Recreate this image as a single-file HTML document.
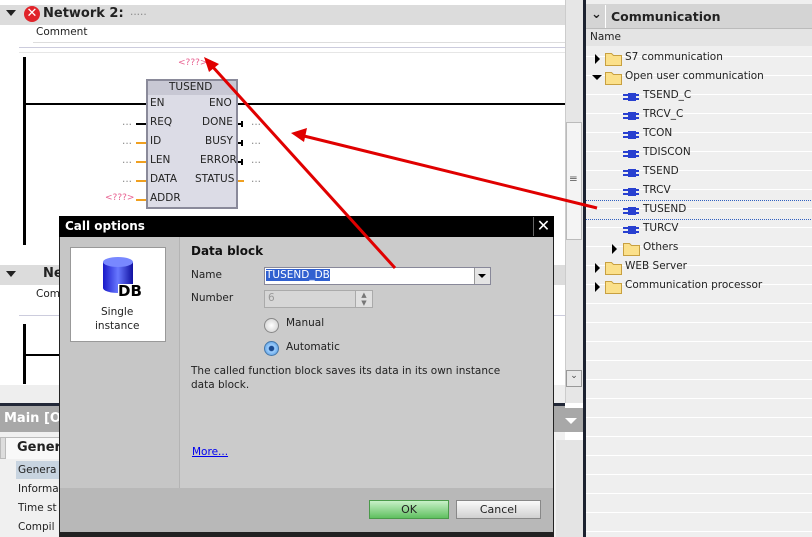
<!DOCTYPE html>
<html><head><style>
*{margin:0;padding:0;box-sizing:border-box}
body{width:812px;height:537px;overflow:hidden;background:#fff;font-family:"DejaVu Sans","Liberation Sans",sans-serif;font-size:11px;color:#222;position:relative}
.a{position:absolute}
.lbl{position:absolute;font-size:10.5px;white-space:nowrap}
.r .lbl{}
</style></head><body>
<!-- editor top -->
<div class="a" style="left:0;top:5px;width:565px;height:20px;background:#dcdcdc"></div>
<div class="a" style="left:6px;top:10px;width:0;height:0;border-left:5px solid transparent;border-right:5px solid transparent;border-top:6px solid #222"></div>
<div class="a" style="left:24px;top:6px;width:16px;height:16px;border-radius:50%;background:#e0242a;color:#fff;font-size:13px;font-weight:bold;line-height:16px;text-align:center">✕</div>
<div class="lbl" style="left:43px;top:6px;font-size:13px;font-weight:bold">Network 2:</div>
<div class="lbl" style="left:130px;top:6px;color:#888">.....</div>
<div class="a" style="left:33px;top:26px;width:532px;height:17px;background:#fff;border-bottom:1px solid #ddd"></div>
<div class="lbl" style="left:36px;top:26px">Comment</div>
<div class="a" style="left:19px;top:47px;width:546px;height:1px;background:#ccccdd"></div>
<div class="a" style="left:19px;top:52px;width:546px;height:1px;background:#e6e6e6"></div>
<!-- ladder -->
<div class="a" style="left:23px;top:57px;width:3px;height:188px;background:#000"></div>
<div class="a" style="left:23px;top:103px;width:124px;height:2px;background:#000"></div>
<div class="a" style="left:238px;top:103px;width:327px;height:2px;background:#000"></div>
<div class="lbl" style="left:178px;top:58px;color:#e86090;font-size:9px">&lt;???&gt;</div>
<div class="a" style="left:146px;top:79px;width:92px;height:130px;background:#dcdce6;border:2px solid #8a8a9a"></div>
<div class="a" style="left:148px;top:81px;width:88px;height:14px;background:#c8c8d4"></div>
<div class="lbl" style="left:169px;top:81px">TUSEND</div>
<div class="lbl" style="left:150px;top:97px">EN</div><div class="lbl" style="left:209px;top:97px">ENO</div>
<div class="lbl" style="left:150px;top:116px">REQ</div><div class="lbl" style="left:202px;top:116px">DONE</div>
<div class="lbl" style="left:150px;top:135px">ID</div><div class="lbl" style="left:205px;top:135px">BUSY</div>
<div class="lbl" style="left:150px;top:154px">LEN</div><div class="lbl" style="left:200px;top:154px">ERROR</div>
<div class="lbl" style="left:150px;top:173px">DATA</div><div class="lbl" style="left:195px;top:173px">STATUS</div>
<div class="lbl" style="left:150px;top:192px">ADDR</div>
<div class="a" style="left:136px;top:123px;width:10px;height:2px;background:#000"></div>
<div class="a" style="left:136px;top:142px;width:10px;height:2px;background:#f0a020"></div>
<div class="a" style="left:136px;top:161px;width:10px;height:2px;background:#f0a020"></div>
<div class="a" style="left:136px;top:180px;width:10px;height:2px;background:#f0a020"></div>
<div class="a" style="left:136px;top:199px;width:10px;height:2px;background:#f0a020"></div>
<div class="a" style="left:238px;top:123px;width:5px;height:2px;background:#000"></div><div class="a" style="left:241px;top:121px;width:2px;height:6px;background:#000"></div>
<div class="a" style="left:238px;top:142px;width:5px;height:2px;background:#000"></div><div class="a" style="left:241px;top:140px;width:2px;height:6px;background:#000"></div>
<div class="a" style="left:238px;top:161px;width:5px;height:2px;background:#000"></div><div class="a" style="left:241px;top:159px;width:2px;height:6px;background:#000"></div>
<div class="a" style="left:238px;top:180px;width:6px;height:2px;background:#f0a020"></div>
<div class="lbl" style="left:122px;top:116px;color:#888">...</div>
<div class="lbl" style="left:122px;top:135px;color:#888">...</div>
<div class="lbl" style="left:122px;top:154px;color:#888">...</div>
<div class="lbl" style="left:122px;top:173px;color:#888">...</div>
<div class="lbl" style="left:105px;top:193px;color:#e86090;font-size:9px">&lt;???&gt;</div>
<div class="lbl" style="left:251px;top:116px;color:#888">...</div>
<div class="lbl" style="left:251px;top:135px;color:#888">...</div>
<div class="lbl" style="left:251px;top:154px;color:#888">...</div>
<div class="lbl" style="left:251px;top:173px;color:#888">...</div>
<!-- network 3 -->
<div class="a" style="left:0;top:265px;width:565px;height:20px;background:#dcdcdc"></div>
<div class="a" style="left:6px;top:271px;width:0;height:0;border-left:5px solid transparent;border-right:5px solid transparent;border-top:6px solid #222"></div>
<div class="lbl" style="left:43px;top:266px;font-size:13px;font-weight:bold">Ne</div>
<div class="lbl" style="left:36px;top:288px">Com</div>
<div class="a" style="left:19px;top:315px;width:546px;height:1px;background:#ccccdd"></div>
<div class="a" style="left:23px;top:324px;width:3px;height:60px;background:#000"></div>
<div class="a" style="left:23px;top:354px;width:40px;height:2px;background:#000"></div>
<div class="a" style="left:0;top:385px;width:565px;height:18px;background:#eee"></div>
<!-- bottom inspector -->
<div class="a" style="left:0;top:403px;width:565px;height:3px;background:#222838"></div>
<div class="a" style="left:0;top:406px;width:565px;height:26px;background:#a8a8a8"></div>
<div class="lbl" style="left:4px;top:411px;color:#fff;font-weight:bold;font-size:13px">Main [OI</div>
<div class="a" style="left:0;top:432px;width:565px;height:105px;background:#f0f0f0"></div>
<div class="a" style="left:0;top:437px;width:6px;height:22px;background:#ddd;border:1px solid #bbb"></div>
<div class="a" style="left:6px;top:437px;width:60px;height:22px;background:#f8f8f8;border-top:1px solid #bbb"></div>
<div class="lbl" style="left:17px;top:440px;font-weight:bold;font-size:13px">Genera</div>
<div class="a" style="left:16px;top:461px;width:50px;height:18px;background:#c8d4e0"></div>
<div class="lbl" style="left:18px;top:464px">Genera</div>
<div class="lbl" style="left:18px;top:483px">Informa</div>
<div class="lbl" style="left:18px;top:502px">Time st</div>
<div class="lbl" style="left:18px;top:521px">Compil</div>
<!-- scrollbar -->
<div class="a" style="left:565px;top:0;width:18px;height:403px;background:#e6e6e6;border-left:1px solid #ccc"></div>
<div class="a" style="left:566px;top:122px;width:16px;height:118px;background:#f4f4f4;border:1px solid #bbb"></div>
<div class="lbl" style="left:569px;top:173px;color:#666">≡</div>
<div class="a" style="left:566px;top:370px;width:16px;height:17px;background:#e8e8e8;border:1px solid #999;font-size:9px;text-align:center;color:#444">⌄</div>
<div class="a" style="left:558px;top:408px;width:25px;height:24px;background:#a8a8a8"></div>
<div class="a" style="left:565px;top:418px;width:0;height:0;border-left:6px solid transparent;border-right:6px solid transparent;border-top:6px solid #fff"></div>
<div class="a" style="left:556px;top:440px;width:27px;height:97px;background:#e4e4e4"></div>
<!-- right panel -->
<div class="a" style="left:583px;top:0;width:3px;height:537px;background:#1c2230"></div>
<div class="a" style="left:586px;top:0;width:226px;height:537px;background:repeating-linear-gradient(#efefef 0,#efefef 18px,#fff 18px,#fff 19px)"></div>
<div class="a" style="left:586px;top:4px;width:226px;height:25px;background:#d4d4d4;border-bottom:1px solid #bbb"></div>
<div class="a" style="left:605px;top:5px;width:1px;height:23px;background:#fff"></div>
<div class="lbl" style="left:591px;top:7px;font-weight:bold;font-size:13px">⌄</div>
<div class="lbl" style="left:611px;top:9px;font-weight:bold;font-size:12.5px">Communication</div>
<div class="a" style="left:586px;top:29px;width:226px;height:17px;background:#e4e4e4"></div>
<div class="lbl" style="left:590px;top:31px">Name</div>
<svg class="a" style="left:586px;top:48px" width="226" height="250">
<g fill="#000"><path d="M9 6 l5 5 -5 5z"/><path d="M6 27 l10 0 -5 5z"/><path d="M26 196 l5 5 -5 5z"/><path d="M9 215 l5 5 -5 5z"/><path d="M9 234 l5 5 -5 5z"/></g>
<g fill="#fbe08a" stroke="#c8a040"><path d="M19.5 5.5h6l2 2h8v10h-16z"/><path d="M19.5 24.5h6l2 2h8v10h-16z"/><path d="M37.5 195.5h6l2 2h8v10h-16z"/><path d="M19.5 214.5h6l2 2h8v10h-16z"/><path d="M19.5 233.5h6l2 2h8v10h-16z"/></g>
<g fill="#2840d0"><rect x="42" y="45" width="8" height="8"/><rect x="42" y="64" width="8" height="8"/><rect x="42" y="83" width="8" height="8"/><rect x="42" y="102" width="8" height="8"/><rect x="42" y="121" width="8" height="8"/><rect x="42" y="140" width="8" height="8"/><rect x="42" y="159" width="8" height="8"/><rect x="42" y="178" width="8" height="8"/>
<rect x="37" y="46" width="16" height="2"/><rect x="37" y="50" width="16" height="2"/><rect x="37" y="65" width="16" height="2"/><rect x="37" y="69" width="16" height="2"/><rect x="37" y="84" width="16" height="2"/><rect x="37" y="88" width="16" height="2"/><rect x="37" y="103" width="16" height="2"/><rect x="37" y="107" width="16" height="2"/><rect x="37" y="122" width="16" height="2"/><rect x="37" y="126" width="16" height="2"/><rect x="37" y="141" width="16" height="2"/><rect x="37" y="145" width="16" height="2"/><rect x="37" y="160" width="16" height="2"/><rect x="37" y="164" width="16" height="2"/><rect x="37" y="179" width="16" height="2"/><rect x="37" y="183" width="16" height="2"/></g>
<line x1="0" y1="152.5" x2="226" y2="152.5" stroke="#3060c0" stroke-dasharray="1,1"/>
<line x1="0" y1="171.5" x2="226" y2="171.5" stroke="#3060c0" stroke-dasharray="1,1"/>
</svg>
<div class="lbl" style="left:625px;top:51px">S7 communication</div>
<div class="lbl" style="left:625px;top:70px">Open user communication</div>
<div class="lbl" style="left:643px;top:89px">TSEND_C</div>
<div class="lbl" style="left:643px;top:108px">TRCV_C</div>
<div class="lbl" style="left:643px;top:127px">TCON</div>
<div class="lbl" style="left:643px;top:146px">TDISCON</div>
<div class="lbl" style="left:643px;top:165px">TSEND</div>
<div class="lbl" style="left:643px;top:184px">TRCV</div>
<div class="lbl" style="left:643px;top:203px">TUSEND</div>
<div class="lbl" style="left:643px;top:222px">TURCV</div>
<div class="lbl" style="left:643px;top:241px">Others</div>
<div class="lbl" style="left:625px;top:260px">WEB Server</div>
<div class="lbl" style="left:625px;top:279px">Communication processor</div>
<!-- dialog -->
<div class="a" style="left:59px;top:216px;width:495px;height:321px;background:#cbcbcb;border:1px solid #222"></div>
<div class="a" style="left:59px;top:216px;width:495px;height:21px;background:#000"></div>
<div class="lbl" style="left:65px;top:219px;color:#fff;font-weight:bold;font-size:12px">Call options</div>
<div class="a" style="left:533px;top:217px;width:20px;height:19px;border-left:1px solid #666;color:#fff;font-size:16px;line-height:18px;text-align:center;font-weight:bold">✕</div>
<div class="a" style="left:60px;top:237px;width:120px;height:251px;background:#c6c6c6;border-right:1px solid #b4b4b4"></div>
<div class="a" style="left:70px;top:247px;width:96px;height:95px;background:#fff;border:1px solid #999"></div>
<svg class="a" style="left:100px;top:256px" width="40" height="46"><defs><linearGradient id="g" x1="0" x2="1"><stop offset="0" stop-color="#1818c8"/><stop offset=".5" stop-color="#6878ff"/><stop offset="1" stop-color="#1010a0"/></linearGradient></defs><path d="M3 6v26a15 5 0 0 0 30 0V6z" fill="url(#g)"/><ellipse cx="18" cy="6" rx="15" ry="5" fill="#7888ff"/></svg>
<div class="lbl" style="left:118px;top:284px;font-weight:bold;font-size:15px;color:#000;background:#fff;line-height:15px">DB</div>
<div class="lbl" style="left:101px;top:306px">Single</div>
<div class="lbl" style="left:95px;top:320px">instance</div>
<div class="lbl" style="left:191px;top:244px;font-weight:bold;font-size:12px;color:#111">Data block</div>
<div class="lbl" style="left:191px;top:269px">Name</div>
<div class="a" style="left:264px;top:267px;width:227px;height:18px;background:#fff;border:1px solid #889"></div>
<div class="lbl" style="left:266px;top:269px;background:#3060d0;color:#fff">TUSEND_DB</div>
<div class="a" style="left:474px;top:268px;width:16px;height:16px;background:#e4e4e4;border-left:1px solid #999"></div>
<div class="a" style="left:478px;top:274px;width:0;height:0;border-left:4px solid transparent;border-right:4px solid transparent;border-top:4px solid #000"></div>
<div class="lbl" style="left:191px;top:292px">Number</div>
<div class="a" style="left:264px;top:290px;width:109px;height:18px;background:#d6d6d6;border:1px solid #aaa"></div>
<div class="lbl" style="left:268px;top:292px;color:#999">6</div>
<div class="a" style="left:355px;top:291px;width:17px;height:16px;background:#e0e0e0;border-left:1px solid #aaa;font-size:7px;text-align:center;line-height:8px;color:#777">▲<br>▼</div>
<div class="a" style="left:264px;top:318px;width:15px;height:15px;border-radius:50%;background:radial-gradient(#fff,#ccc);border:1px solid #888"></div>
<div class="lbl" style="left:286px;top:317px">Manual</div>
<div class="a" style="left:264px;top:341px;width:15px;height:15px;border-radius:50%;background:radial-gradient(#1a4a90 25%,#9fd0ff 35%,#4a90d8);border:1px solid #47a"></div>
<div class="lbl" style="left:286px;top:341px">Automatic</div>
<div class="lbl" style="left:191px;top:365px">The called function block saves its data in its own instance</div>
<div class="lbl" style="left:191px;top:379px">data block.</div>
<div class="lbl" style="left:192px;top:446px;color:#0000ee;text-decoration:underline">More...</div>
<div class="a" style="left:60px;top:488px;width:493px;height:44px;background:#b8b8b8"></div>
<div class="a" style="left:59px;top:532px;width:495px;height:5px;background:#222"></div>
<div class="a" style="left:369px;top:500px;width:80px;height:19px;background:linear-gradient(#c8f0c8,#60c060);border:1px solid #4a9a4a;text-align:center;line-height:17px;font-size:11px">OK</div>
<div class="a" style="left:456px;top:500px;width:85px;height:19px;background:linear-gradient(#fafafa,#d0d0d0);border:1px solid #888;text-align:center;line-height:17px;font-size:11px">Cancel</div>
<!-- red arrows -->
<svg class="a" style="left:0;top:0" width="812" height="537">
<g stroke="#e00000" stroke-width="3" fill="#e00000">
<line x1="395" y1="268" x2="212" y2="66"/>
<line x1="597" y1="208" x2="304" y2="136"/>
</g>
<path d="M204 57 L219 64 L209 72z" fill="#e00000"/>
<path d="M291 133 L307 128 L304 142z" fill="#e00000"/>
</svg>
</body></html>
